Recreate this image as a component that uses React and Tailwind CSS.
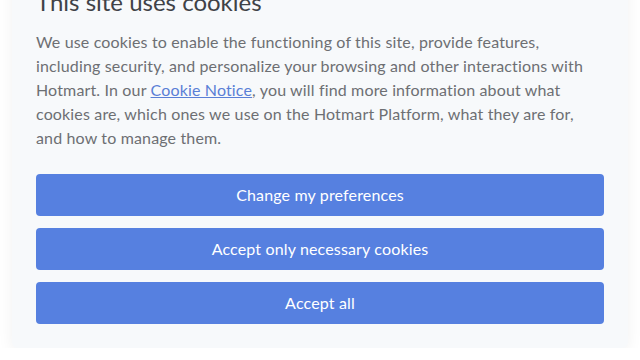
import React from 'react';

const buttons = ['Change my preferences', 'Accept only necessary cookies', 'Accept all'];

export default function App() {
  return (
    <div className="min-h-screen bg-white px-3 font-['Lato',sans-serif]">
      <div className="-mt-[22px] rounded-md bg-[#f7f9fb] px-6 pt-2 pb-6 shadow-[0_4px_16px_rgba(0,0,0,0.06)]">
        <h2 className="text-[24px] leading-8 text-[#3f4247]">This site uses cookies</h2>
        <p className="mt-3 max-w-[560px] text-[16px] leading-6 tracking-[0.15px] text-[#6d6f73]">
          We use cookies to enable the functioning of this site, provide features, including security, and personalize
          your browsing and other interactions with Hotmart. In our{' '}
          <a href="#" className="text-[#5a7fd6] underline">Cookie Notice</a>, you will find more information about what
          cookies are, which ones we use on the Hotmart Platform, what they are for, and how to manage them.
        </p>
        <div className="mt-6 flex flex-col gap-3">
          {buttons.map((b) => (
            <button key={b} className="h-[42px] w-full rounded-[4px] bg-[#5680e0] text-[16px] tracking-[0.15px] text-white">
              {b}
            </button>
          ))}
        </div>
      </div>
    </div>
  );
}
